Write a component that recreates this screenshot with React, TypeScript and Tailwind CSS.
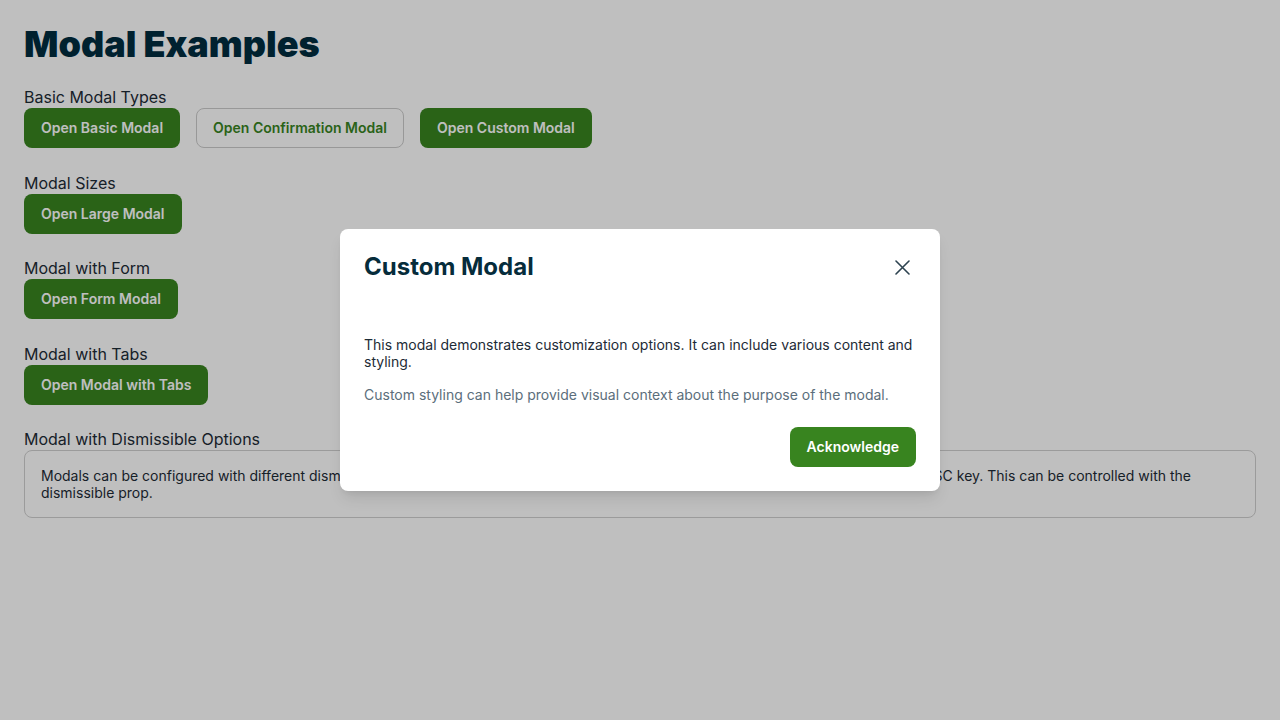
const Section = ({ label, children }: { label: string; children: React.ReactNode }) => (
  <div className="mb-[23.5px]">
    <p className="text-base leading-[22px] text-[#1d2b36]">{label}</p>
    {children}
  </div>
);

const PrimaryBtn = ({ children }: { children: React.ReactNode }) => (
  <button className="h-10 rounded-lg border border-transparent bg-[#38841f] px-4 text-sm font-semibold text-white">
    {children}
  </button>
);

export default function App() {
  return (
    <div className="relative min-h-[720px] bg-white font-['Inter',sans-serif]">
      <div className="p-6">
        <h1 className="mb-[22px] text-4xl font-black leading-[40px] text-[#002d3f]">Modal Examples</h1>

        <Section label="Basic Modal Types">
          <div className="flex gap-4">
            <PrimaryBtn>Open Basic Modal</PrimaryBtn>
            <button className="h-10 rounded-lg border border-[#cbcbcb] bg-white px-4 text-sm font-semibold text-[#38841f]">
              Open Confirmation Modal
            </button>
            <PrimaryBtn>Open Custom Modal</PrimaryBtn>
          </div>
        </Section>

        <Section label="Modal Sizes">
          <PrimaryBtn>Open Large Modal</PrimaryBtn>
        </Section>

        <Section label="Modal with Form">
          <PrimaryBtn>Open Form Modal</PrimaryBtn>
        </Section>

        <Section label="Modal with Tabs">
          <PrimaryBtn>Open Modal with Tabs</PrimaryBtn>
        </Section>

        <div>
          <p className="text-base leading-[22px] text-[#1d2b36]">Modal with Dismissible Options</p>
          <div className="rounded-lg border border-[#cfcfcf] p-4 text-sm leading-[17px] text-[#1d2b36]">
            Modals can be configured with different dismissal behaviors. By default, modals can be closed by clicking outside, or by pressing the ESC key. This can be controlled with the dismissible prop.
          </div>
        </div>
      </div>

      {/* overlay + modal */}
      <div className="absolute inset-0 flex items-center justify-center bg-black/25">
        <div className="w-[600px] rounded-lg bg-white shadow-lg">
          <div className="flex items-start justify-between px-6 pt-6">
            <h2 className="text-2xl font-bold leading-[28px] text-[#062c3b]">Custom Modal</h2>
            <button className="-mr-[2px] mt-[-2px] flex h-8 w-8 items-center justify-center">
              <svg width="15" height="15" viewBox="0 0 15 15" fill="none" stroke="#2d4350" strokeWidth="1.6" strokeLinecap="round">
                <path d="M1 1l13 13M14 1L1 14" />
              </svg>
            </button>
          </div>
          <div className="px-6 pt-[53px] text-sm leading-[17px]">
            <p className="text-[#1d2b36]">
              This modal demonstrates customization options. It can include various content and styling.
            </p>
            <p className="mt-4 text-[#5b6e7b]">
              Custom styling can help provide visual context about the purpose of the modal.
            </p>
          </div>
          <div className="flex justify-end px-6 pb-6 pt-6">
            <PrimaryBtn>Acknowledge</PrimaryBtn>
          </div>
        </div>
      </div>
    </div>
  );
}
